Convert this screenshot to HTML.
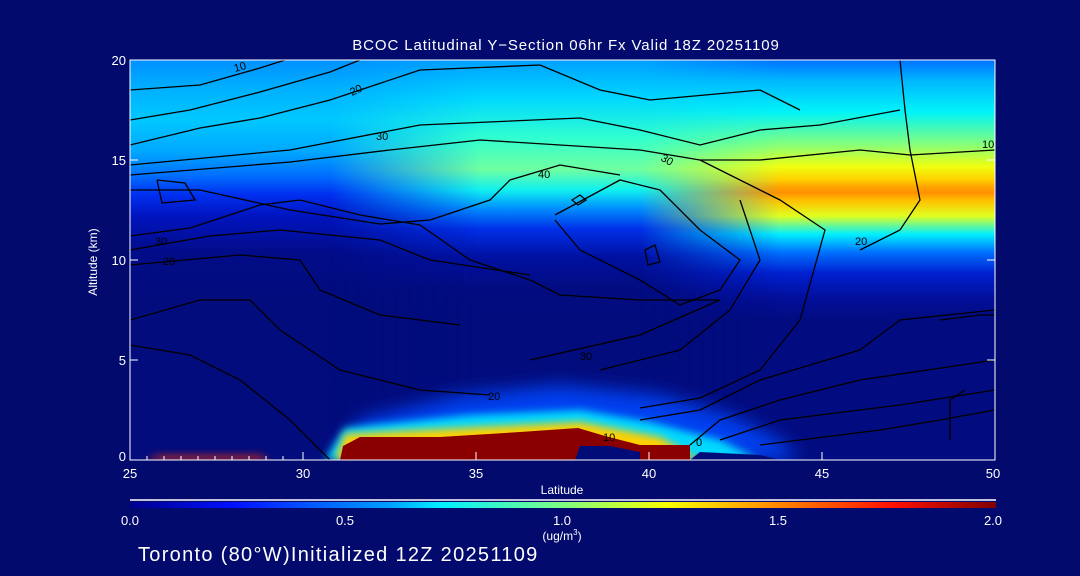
<!DOCTYPE html>
<html><head><meta charset="utf-8"><style>
html,body{margin:0;padding:0;background:#020a6e;width:1080px;height:576px;overflow:hidden}
svg{display:block}
text{font-family:"Liberation Sans",sans-serif;fill:#fff}
.c{fill:#000}
</style></head><body>
<svg width="1080" height="576" viewBox="0 0 1080 576">
<defs>
<filter id="b8" filterUnits="userSpaceOnUse" x="0" y="0" width="1080" height="576"><feGaussianBlur stdDeviation="9"/></filter>
<filter id="b4" filterUnits="userSpaceOnUse" x="0" y="0" width="1080" height="576"><feGaussianBlur stdDeviation="4"/></filter>
<clipPath id="pc"><rect x="130" y="60" width="865" height="400"/></clipPath>
<linearGradient id="cb" x1="0" x2="1">
<stop offset="0" stop-color="#00008c"/><stop offset="0.12" stop-color="#0010ff"/>
<stop offset="0.3" stop-color="#00a0ff"/><stop offset="0.36" stop-color="#00f0ff"/>
<stop offset="0.5" stop-color="#80ff80"/><stop offset="0.62" stop-color="#f8ff00"/>
<stop offset="0.72" stop-color="#ffa000"/><stop offset="0.88" stop-color="#ff1000"/>
<stop offset="1" stop-color="#800000"/></linearGradient>
<linearGradient id="gL" gradientUnits="userSpaceOnUse" x1="0" y1="60" x2="0" y2="300">
<stop offset="0" stop-color="#0090ff"/><stop offset="0.12" stop-color="#00b0ff"/>
<stop offset="0.25" stop-color="#00c8ff"/><stop offset="0.38" stop-color="#00a8ff"/>
<stop offset="0.48" stop-color="#0070ff"/><stop offset="0.56" stop-color="#0030f0"/>
<stop offset="0.65" stop-color="#0014c0"/><stop offset="0.8" stop-color="#020c88"/>
<stop offset="1" stop-color="#020c7c"/></linearGradient>
<linearGradient id="gM" gradientUnits="userSpaceOnUse" x1="0" y1="60" x2="0" y2="320">
<stop offset="0" stop-color="#00a0ff"/><stop offset="0.15" stop-color="#00d8ff"/>
<stop offset="0.3" stop-color="#30ffd0"/><stop offset="0.42" stop-color="#70ffa0"/>
<stop offset="0.5" stop-color="#10f0f0"/><stop offset="0.57" stop-color="#0090ff"/>
<stop offset="0.65" stop-color="#0030e8"/><stop offset="0.76" stop-color="#0010a0"/>
<stop offset="0.88" stop-color="#020c80"/><stop offset="1" stop-color="#020c7c"/></linearGradient>
<linearGradient id="gR" gradientUnits="userSpaceOnUse" x1="0" y1="60" x2="0" y2="320">
<stop offset="0" stop-color="#0070ff"/><stop offset="0.08" stop-color="#00b8ff"/>
<stop offset="0.2" stop-color="#00f4f8"/><stop offset="0.32" stop-color="#80ff80"/>
<stop offset="0.41" stop-color="#f0ff10"/><stop offset="0.46" stop-color="#ffd000"/>
<stop offset="0.49" stop-color="#ffa000"/><stop offset="0.51" stop-color="#ff9000"/>
<stop offset="0.54" stop-color="#ffc000"/><stop offset="0.6" stop-color="#e0ff20"/>
<stop offset="0.67" stop-color="#00f0ff"/><stop offset="0.74" stop-color="#0070ff"/>
<stop offset="0.82" stop-color="#0020d0"/><stop offset="0.92" stop-color="#020e98"/>
<stop offset="1" stop-color="#020c80"/></linearGradient>
<linearGradient id="mM" gradientUnits="userSpaceOnUse" x1="330" x2="480" y1="0" y2="0">
<stop offset="0" stop-color="#000"/><stop offset="1" stop-color="#fff"/></linearGradient>
<linearGradient id="mR" gradientUnits="userSpaceOnUse" x1="640" x2="780" y1="0" y2="0">
<stop offset="0" stop-color="#000"/><stop offset="1" stop-color="#fff"/></linearGradient>
<mask id="kM"><rect x="0" y="0" width="1080" height="576" fill="url(#mM)"/></mask>
<mask id="kR"><rect x="0" y="0" width="1080" height="576" fill="url(#mR)"/></mask>
</defs>
<g clip-path="url(#pc)">
<rect x="130" y="60" width="865" height="400" fill="url(#gL)"/>
<rect x="130" y="60" width="865" height="400" fill="url(#gM)" mask="url(#kM)"/>
<rect x="130" y="60" width="865" height="400" fill="url(#gR)" mask="url(#kR)"/>
<path d="M330 460 L360 420 L460 395 L560 385 L660 395 L730 415 L780 440 L800 460 Z" fill="#0040f0" filter="url(#b8)"/>
<path d="M325 460 L345 428 L470 415 L580 410 L650 422 L720 440 L760 460 Z" fill="#00d8ff" filter="url(#b4)"/>
<path d="M335 460 L345 434 L480 427 L580 422 L660 437 L700 460 Z" fill="#ffd000" filter="url(#b4)"/>
<path d="M340 460 L343 446 L360 437 L440 437 L520 432 L578 428 L605 436 L640 445 L690 445 L690 460 Z" fill="#8a0000"/>
<path d="M145 460 L160 456 L260 456 L270 460 Z" fill="#ff3000" filter="url(#b4)"/>
<path d="M580 446 L610 446 L640 452 L640 460 L575 460 Z" fill="#020c78"/>
<path d="M690 460 L700 452 L760 455 L780 460 Z" fill="#020c78"/>
</g>
<g fill="none" stroke="#000" stroke-width="1.3" clip-path="url(#pc)">
<path d="M130 90 L200 85 L260 68 L285 60"/>
<path d="M130 120 L190 110 L260 92 L330 72 L360 60"/>
<path d="M130 145 L200 128 L260 118 L330 100 L420 70 L540 65 L600 90 L650 100 L760 90 L800 110"/>
<path d="M130 165 L290 150 L420 125 L580 118 L640 130 L700 145 L760 130 L820 125 L900 110"/>
<path d="M130 175 L290 162 L390 150 L480 140 L640 150 L700 160 L760 160 L860 150 L910 155 L995 150"/>
<path d="M130 190 L200 190 L290 210 L380 224 L430 220 L490 200 L510 180 L560 165 L620 175"/>
<path d="M130 236 L190 228 L260 205 L300 200 L360 215 L420 225 L470 260 L530 280 L560 295 L640 300 L720 300"/>
<path d="M130 250 L210 236 L280 230 L380 240 L430 260 L530 275"/>
<path d="M130 265 L240 255 L300 260 L320 290 L380 315 L460 325"/>
<path d="M130 320 L200 300 L250 300 L280 330 L340 370 L420 390 L490 395"/>
<path d="M130 345 L190 355 L240 380 L290 420 L330 460"/>
<path d="M555 220 L580 250 L640 280 L680 305 L720 290 L740 260 L700 230 L660 190 L620 180 L555 215"/>
<path d="M600 370 L680 350 L730 310 L760 260 L740 200"/>
<path d="M530 360 L640 335 L720 300"/>
<path d="M640 408 L700 398 L760 370 L800 320 L825 230 L780 200 L700 160"/>
<path d="M640 420 L700 410 L760 380 L860 350 L900 320 L995 310"/>
<path d="M690 445 L720 420 L780 400 L860 380 L995 360"/>
<path d="M720 440 L780 420 L900 405 L995 390"/>
<path d="M760 445 L880 430 L940 420 L995 410"/>
<path d="M860 250 L900 230 L920 200 L910 150 L905 110 L900 60"/>
<path d="M940 320 L980 315 L995 315"/>
<path d="M950 440 L950 400 L965 390"/>
<path d="M157 180 L185 183 L195 200 L162 203 L157 180"/>
<path d="M572 200 L580 195 L586 200 L578 205 Z"/>
<path d="M645 250 L655 245 L660 262 L648 265 Z"/>
</g>
<g font-size="11">
<text class="c" x="235" y="72" transform="rotate(-15 235 72)">10</text>
<text class="c" x="352" y="96" transform="rotate(-25 352 96)">20</text>
<text class="c" x="376" y="140">30</text>
<text class="c" x="538" y="178">40</text>
<text class="c" x="660" y="160" transform="rotate(30 660 160)">30</text>
<text class="c" x="855" y="245">20</text>
<text class="c" x="155" y="245">30</text>
<text class="c" x="163" y="265">20</text>
<text class="c" x="603" y="441">10</text>
<text class="c" x="696" y="446">0</text>
<text class="c" x="488" y="400">20</text>
<text class="c" x="580" y="360">30</text>
<text class="c" x="982" y="148">10</text>
</g>
<rect x="130" y="60" width="865" height="400" fill="none" stroke="#fff" stroke-width="1"/>
<g stroke="#fff" stroke-width="1">
<path d="M130 460v-8M147 460v-4M164 460v-4M181 460v-4M198 460v-4M215 460v-4M232 460v-4M249 460v-4M266 460v-4M283 460v-4M303 460v-8M476 460v-8M649 460v-8M822 460v-8"/>
<path d="M130 60h8M130 160h8M130 260h8M130 360h8M130 460h8M995 60h-8M995 160h-8M995 260h-8M995 360h-8"/>
</g>
<text x="566" y="50" font-size="15" text-anchor="middle" letter-spacing="0.9">BCOC Latitudinal Y−Section 06hr  Fx Valid 18Z 20251109</text>
<g font-size="13" text-anchor="end">
<text x="126" y="65">20</text><text x="126" y="165">15</text><text x="126" y="265">10</text><text x="126" y="365">5</text><text x="126" y="461">0</text>
</g>
<text x="97" y="262" font-size="12" text-anchor="middle" transform="rotate(-90 97 262)">Altitude (km)</text>
<g font-size="13" text-anchor="middle">
<text x="130" y="478">25</text><text x="303" y="478">30</text><text x="476" y="478">35</text><text x="649" y="478">40</text><text x="822" y="478">45</text><text x="993" y="478">50</text>
</g>
<text x="562" y="494" font-size="12" text-anchor="middle">Latitude</text>
<line x1="130" y1="500" x2="996" y2="500" stroke="#fff" stroke-width="1.5"/>
<rect x="130" y="502" width="866" height="6" fill="url(#cb)"/>
<g font-size="13" text-anchor="middle">
<text x="130" y="525">0.0</text><text x="345" y="525">0.5</text><text x="562" y="525">1.0</text><text x="778" y="525">1.5</text><text x="993" y="525">2.0</text>
</g>
<text x="562" y="540" font-size="12" text-anchor="middle">(ug/m<tspan font-size="8" dy="-5">3</tspan><tspan dy="5">)</tspan></text>
<text x="138" y="561" font-size="20" letter-spacing="1.3">Toronto (80°W)Initialized 12Z 20251109</text>
</svg>
</body></html>
